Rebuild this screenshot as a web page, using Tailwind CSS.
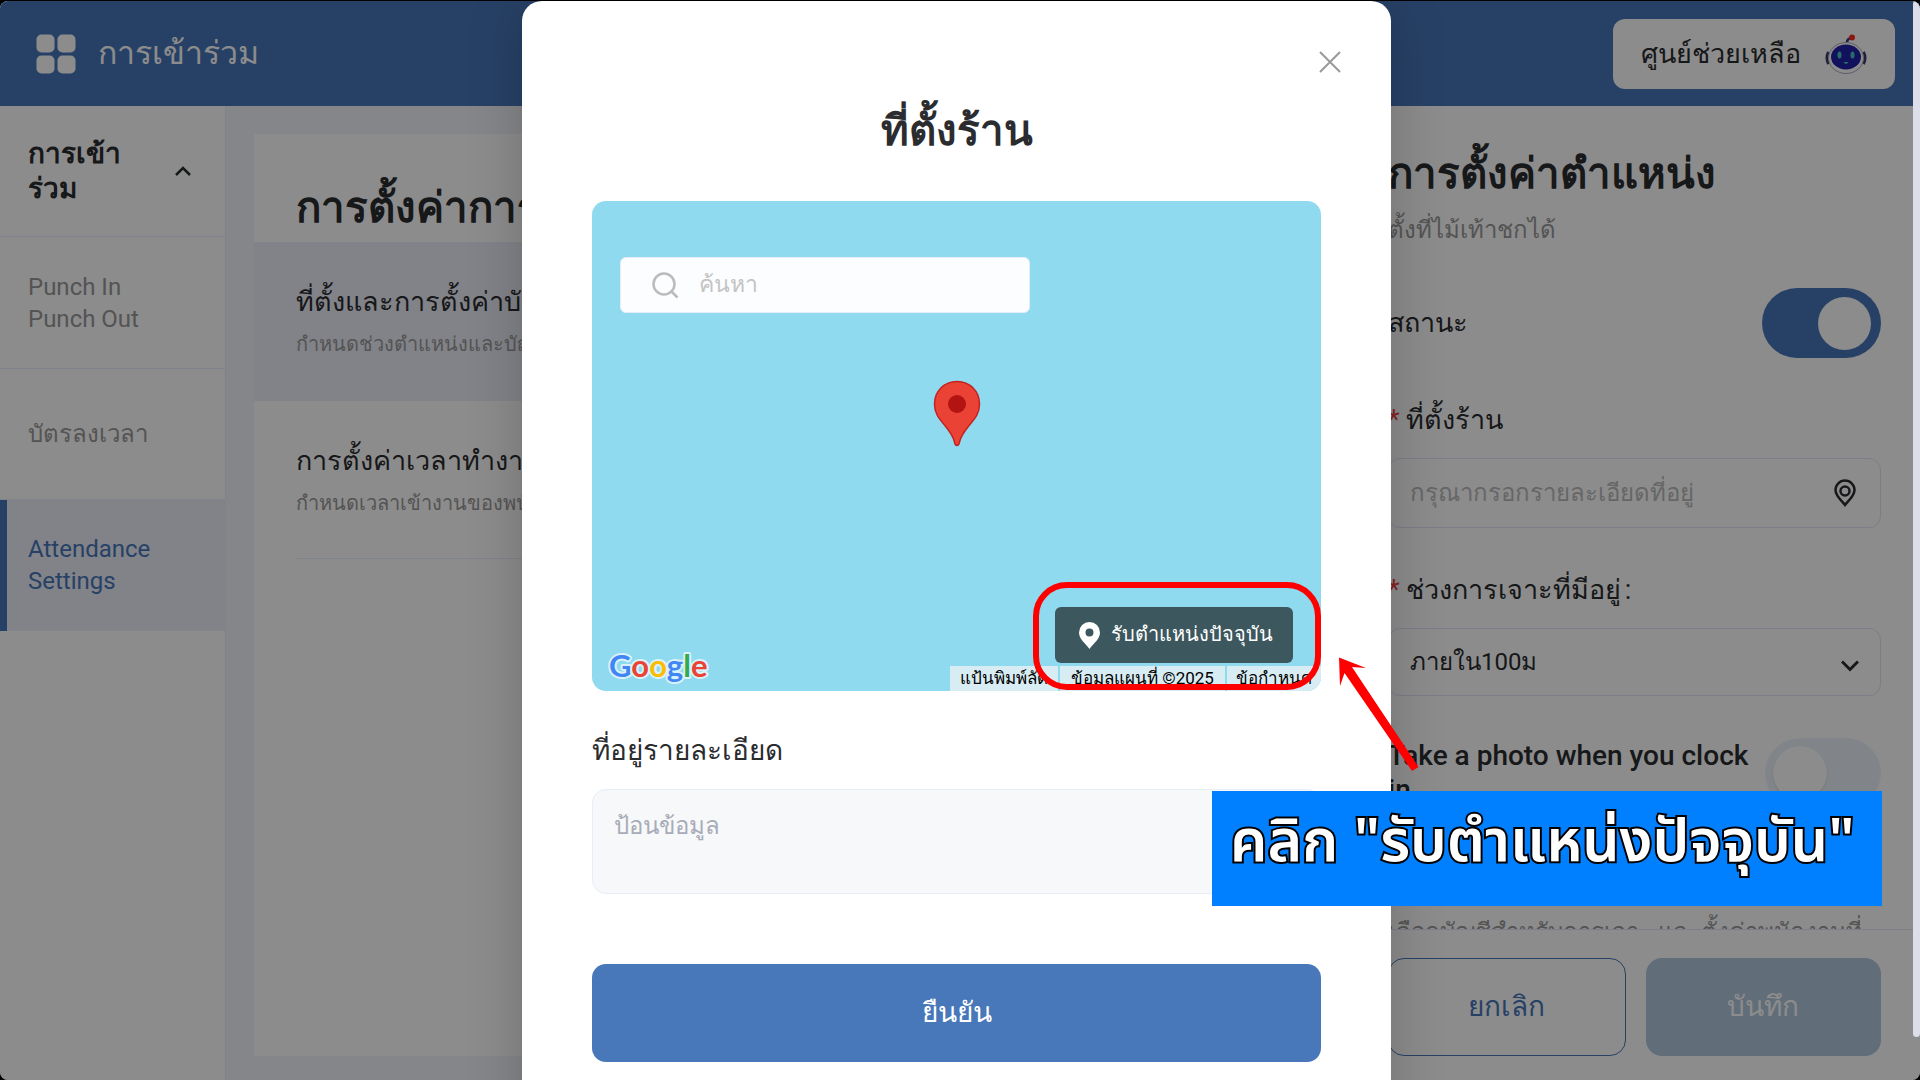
<!DOCTYPE html>
<html lang="th">
<head>
<meta charset="utf-8">
<meta name="viewport" content="width=device-width, initial-scale=1">
<title>การเข้าร่วม</title>
<script src="https://cdn.jsdelivr.net/npm/@tailwindcss/browser@4"></script>
</head>
<body class="h-screen overflow-hidden bg-black pt-px font-[Roboto,sans-serif] text-[#2b2c2f]">
<div class="relative flex h-full flex-col overflow-hidden rounded-lg bg-white pr-[7px]">

  <header class="flex h-[105px] shrink-0 items-center bg-[#4877ba] pl-9 pr-[18px] text-white">
    <svg class="size-10" viewBox="0 0 40 40" fill="currentColor" aria-hidden="true">
      <rect x="0.5" y="0.5" width="18" height="18" rx="5"/><rect x="21.500" y="0.5" width="18" height="18" rx="5"/>
      <rect x="0.5" y="21.500" width="18" height="18" rx="5"/><rect x="21.500" y="21.500" width="18" height="18" rx="5"/>
    </svg>
    <h1 class="ml-[22px] pb-0.5 text-[32px] leading-10">การเข้าร่วม</h1>
    <button class="ml-auto flex h-[70px] items-center gap-6 rounded-xl bg-white px-7 text-[27px] leading-10 text-[#2b2c2f]">
      ศูนย์ช่วยเหลือ
      <svg class="h-10 w-[42px]" viewBox="0 0 42 40" aria-hidden="true">
        <path d="M22 8q0-3 4-4" fill="none" stroke="#2a3f8f" stroke-width="2.500"/>
        <circle cx="27" cy="3.500" r="3" fill="#ff2b20"/>
        <path d="M3.500 18q-3 6 0 12M38.500 18q3 6 0 12" fill="none" stroke="#3c3c66" stroke-width="3"/>
        <ellipse cx="21" cy="24" rx="17.500" ry="15.500" fill="#fff" stroke="#a9a9bf"/>
        <ellipse cx="21" cy="23" rx="15" ry="12.500" fill="#2220ac"/>
        <ellipse cx="14.500" cy="21" rx="2" ry="3.500" fill="#46c7c0"/><ellipse cx="27.500" cy="21" rx="2" ry="3.500" fill="#46c7c0"/>
        <path d="M18.500 28h5q-2.500 4-5 0" fill="#46c7c0"/>
      </svg>
    </button>
  </header>

  <div class="flex min-h-0 flex-1">
    <nav class="w-[226px] shrink-0 border-r border-[#e6edfa] text-2xl leading-8 text-[#999]">
      <button class="flex h-[131px] w-full items-center justify-between border-b border-[#e6edfa] pl-7 pr-[34px] text-left text-[28px] leading-[35px] font-semibold text-[#2b2c2f]">
        <span>การเข้า<br>ร่วม</span>
        <svg class="h-3 w-4" viewBox="0 0 16 12" fill="none" stroke="currentColor" stroke-width="2.500" aria-hidden="true"><path d="M1 10l7-7 7 7"/></svg>
      </button>
      <a href="#" class="flex h-[132px] items-center border-b border-[#e6edfa] pl-7">Punch In<br>Punch Out</a>
      <a href="#" class="flex h-[131px] items-center border-b border-[#e6edfa] pl-7">บัตรลงเวลา</a>
      <a href="#" class="flex h-[131px] items-center border-l-[7px] border-[#4877ba] bg-[#eceef7] pb-0.5 pl-[21px] text-[#4877ba]">Attendance<br>Settings</a>
    </nav>

    <main class="min-w-0 flex-1 bg-[#f2f5fa] px-7 pt-7 pb-6">
      <section class="h-full bg-white">
        <h2 class="h-[108px] pt-[46px] pl-[42px] text-[42px] leading-[56px] font-semibold whitespace-nowrap">การตั้งค่าการเข้าร่วม</h2>
        <a href="#" class="block h-[159px] overflow-hidden bg-[#eceef7] pt-10 pl-[42px]">
          <h3 class="text-[27px] leading-10">ที่ตั้งและการตั้งค่าบัตรลงเวลา</h3>
          <p class="pt-1.5 text-xl leading-8 text-[#999]">กำหนดช่วงตำแหน่งและบัญชีสำหรับการลงเวลา</p>
        </a>
        <a href="#" class="ml-[42px] block h-[158px] overflow-hidden border-b border-[#e6edfa] pt-10">
          <h3 class="text-[27px] leading-10">การตั้งค่าเวลาทำงาน</h3>
          <p class="pt-1.5 text-xl leading-8 text-[#999]">กำหนดเวลาเข้างานของพนักงานในร้าน</p>
        </a>
      </section>
    </main>

    <aside class="flex w-[557px] shrink-0 flex-col bg-white">
      <form class="min-h-0 flex-1 overflow-hidden px-8">
        <h2 class="pt-10 text-[42px] leading-[56px] font-semibold">การตั้งค่าตำแหน่ง</h2>
        <p class="pt-2.5 text-2xl leading-9 text-[#999]">ตั้งที่ไม้เท้าชกได้</p>
        <div class="mt-10 flex h-[70px] items-center justify-between">
          <label for="status" class="text-[27px] leading-10">สถานะ</label>
          <input id="status" type="checkbox" checked class="flex h-[70px] w-[119px] appearance-none items-center rounded-full bg-[#4877ba] pl-14 before:size-[53px] before:rounded-full before:bg-white">
        </div>
        <label for="place" class="mt-10 block pt-0.5 text-[27px] leading-10"><span class="mr-1.5 text-[#f04040]">*</span>ที่ตั้งร้าน</label>
        <div class="mt-[18px] flex h-[70px] items-center rounded-xl border border-[#e1e6f5] pr-6 pl-[21px]">
          <input id="place" type="text" placeholder="กรุณากรอกรายละเอียดที่อยู่" class="h-full min-w-0 flex-1 text-2xl outline-none placeholder:text-[#bbb]">
          <svg class="h-7 w-[22px]" viewBox="0 0 22 28" fill="none" stroke="currentColor" stroke-width="2.500" aria-hidden="true"><path d="M11 26C8 22 1.500 17 1.500 11a9.500 9.500 0 0 1 19 0c0 6-6.500 11-9.500 15z"/><circle cx="11" cy="12" r="4.500"/></svg>
        </div>
        <label for="range" class="mt-10 block pt-0.5 text-[27px] leading-10"><span class="mr-1.5 text-[#f04040]">*</span>ช่วงการเจาะที่มีอยู่<span class="ml-1">:</span></label>
        <div class="relative mt-[18px] h-[68px]">
          <select id="range" class="h-full w-full appearance-none rounded-xl border border-[#e1e6f5] pl-[21px] text-2xl"><option>ภายใน100ม</option></select>
          <svg class="absolute top-8 right-[22px] h-3 w-[18px]" viewBox="0 0 18 12" fill="none" stroke="currentColor" stroke-width="3" aria-hidden="true"><path d="M1 1.500l8 8 8-8"/></svg>
        </div>
        <div class="mt-[42px] flex h-[70px] items-center">
          <label for="photo" class="flex-1 text-[28px] leading-[34px] font-medium">Take a photo when you clock in</label>
          <input id="photo" type="checkbox" class="flex h-[70px] w-[116px] appearance-none items-center rounded-full bg-[#ecf3fc] pl-2 before:size-[54px] before:rounded-full before:bg-white before:shadow">
        </div>
        <p class="mt-[106px] text-2xl leading-9 whitespace-nowrap text-[#999]">เลือกบัญชีสำหรับการเจาะ และตั้งค่าพนักงานที่</p>
      </form>
      <footer class="flex h-[151px] shrink-0 gap-5 border-t border-[#e6e6fa] px-8 pt-7 text-[28px]">
        <button class="h-[98px] flex-1 rounded-2xl border border-[#4877ba] text-[#4877ba]">ยกเลิก</button>
        <button class="h-[98px] flex-1 rounded-2xl bg-[#b2c6de] text-white">บันทึก</button>
      </footer>
    </aside>
  </div>

  <div class="absolute inset-0 flex justify-center overflow-hidden bg-black/45 pr-[7px]">
    <div role="dialog" aria-labelledby="dlg" class="relative flex h-[1160px] w-[869px] shrink-0 flex-col rounded-[20px] bg-white px-[70px] pt-[102px] shadow-[0_0_56px_rgba(0,0,0,0.2)]">
      <button aria-label="ปิด" class="absolute top-[50px] right-[50px] text-[#999]">
        <svg class="size-[22px]" viewBox="0 0 22 22" fill="none" stroke="currentColor" stroke-width="2"><path d="M1 1l20 20M21 1L1 21"/></svg>
      </button>
      <h2 id="dlg" class="text-center text-[42px] leading-[56px] font-semibold">ที่ตั้งร้าน</h2>

      <div class="relative mt-[42px] h-[490px] overflow-hidden rounded-[14px] bg-[#8fdaee]">
        <label class="absolute top-14 left-7 flex h-14 w-[410px] items-center gap-5 rounded-md border border-[#e6edfa] bg-[#fcfdff] pl-[31px]">
          <svg class="size-[27px] text-[#bbb]" viewBox="0 0 27 27" fill="none" stroke="currentColor" stroke-width="2.500" aria-hidden="true"><circle cx="12" cy="12" r="10.500"/><path d="M19 19l6.500 6.500"/></svg>
          <input type="search" aria-label="ค้นหา" placeholder="ค้นหา" class="min-w-0 flex-1 text-[23px] outline-none placeholder:text-[#c4c4c4]">
        </label>
        <svg class="absolute top-[179px] left-1/2 h-[67px] w-12 -translate-x-1/2" viewBox="0 0 48 67" aria-hidden="true">
          <path d="M24 1.500C11 1.500 1.500 11.500 1.500 24c0 9 4 14 10 21 5 6 8.500 11 10 17 .8 4.500 4.200 4.500 5 0 1.500-6 5-11 10-17 6-7 10-12 10-21C46.500 11.500 37 1.500 24 1.500z" fill="#ea4335" stroke="#c5221f" stroke-width="1.500"/>
          <circle cx="24" cy="24" r="9" fill="#b31412"/>
        </svg>
        <svg class="absolute bottom-0 left-4 h-12 w-28" viewBox="0 0 112 48" role="img" aria-label="Google">
          <text x="1" y="34" font-family="Lato, sans-serif" font-size="31" font-weight="700" stroke="#d9f2fa" stroke-width="4" stroke-linejoin="round" paint-order="stroke"><tspan fill="#4285f4">G</tspan><tspan fill="#ea4335">o</tspan><tspan fill="#fbbc04">o</tspan><tspan fill="#4285f4">g</tspan><tspan fill="#34a853">l</tspan><tspan fill="#ea4335">e</tspan></text>
        </svg>
        <button class="absolute right-7 bottom-7 flex h-14 w-[238px] items-center gap-[11px] rounded-md bg-[#3c575e] pl-6 text-xl whitespace-nowrap text-white">
          <svg class="h-[27px] w-[21px]" viewBox="0 0 21 27" fill="currentColor" aria-hidden="true"><path fill-rule="evenodd" d="M10.500 0A10.500 10.500 0 0 0 0 10.500C0 17 6 21 10.500 27 15 21 21 17 21 10.500A10.500 10.500 0 0 0 10.500 0zm0 6.500a4 4 0 1 1 0 8 4 4 0 0 1 0-8z"/></svg>
          <span class="pb-0.5">รับตำแหน่งปัจจุบัน</span>
        </button>
        <div class="absolute right-0 bottom-0 flex h-[25px] gap-0.5 text-[17px] leading-[25px] whitespace-nowrap text-black">
          <button class="w-[108px] bg-[#d7ecf3] px-2">แป้นพิมพ์ลัด</button>
          <span class="w-[165px] bg-[#d7ecf3] text-center">ข้อมูลแผนที่ ©2025</span>
          <a href="#" class="w-[94px] bg-[#d7ecf3] text-center">ข้อกำหนด</a>
        </div>
      </div>

      <label for="detail" class="mt-10 text-[28px] leading-10">ที่อยู่รายละเอียด</label>
      <textarea id="detail" placeholder="ป้อนข้อมูล" class="mt-[18px] h-[105px] shrink-0 resize-none rounded-[14px] border border-[#e6eefa] bg-[#f6f8fa] px-[21px] py-4 text-2xl leading-10 outline-none placeholder:text-[#a8abb8]"></textarea>
      <button class="mt-[70px] h-[98px] shrink-0 rounded-[14px] bg-[#4877ba] text-[28px] text-white">ยืนยัน</button>
    </div>
  </div>

  <div class="absolute top-0 right-0 h-[96%] w-[7px] rounded-full bg-[#dcdfea]"></div>

  <!-- Tutorial annotations over the dialog -->
  <div class="absolute top-[581px] left-[1033px] h-[108px] w-[288px] rounded-[34px] border-[6px] border-[#f00]"></div>
  <svg class="absolute top-[655px] left-[1337px] h-[116px] w-[84px]" viewBox="0 0 84 116" fill="#f00" aria-hidden="true"><path d="M2 1.500L29 12l-14-1L81.500 111l-6.500 4L7.500 17 3 30z"/></svg>
  <p class="absolute top-[790px] left-[1212px] flex h-[115px] w-[670px] bg-[#0080ff] pl-[18px] pt-3 font-['Noto_Sans_Thai',sans-serif] text-[59px] leading-[80px] font-semibold whitespace-nowrap text-white [-webkit-text-stroke:4px_#000] [paint-order:stroke_fill] [stroke-linejoin:round]">คลิก "รับตำแหน่งปัจจุบัน"</p>
</div>
</body>
</html>
